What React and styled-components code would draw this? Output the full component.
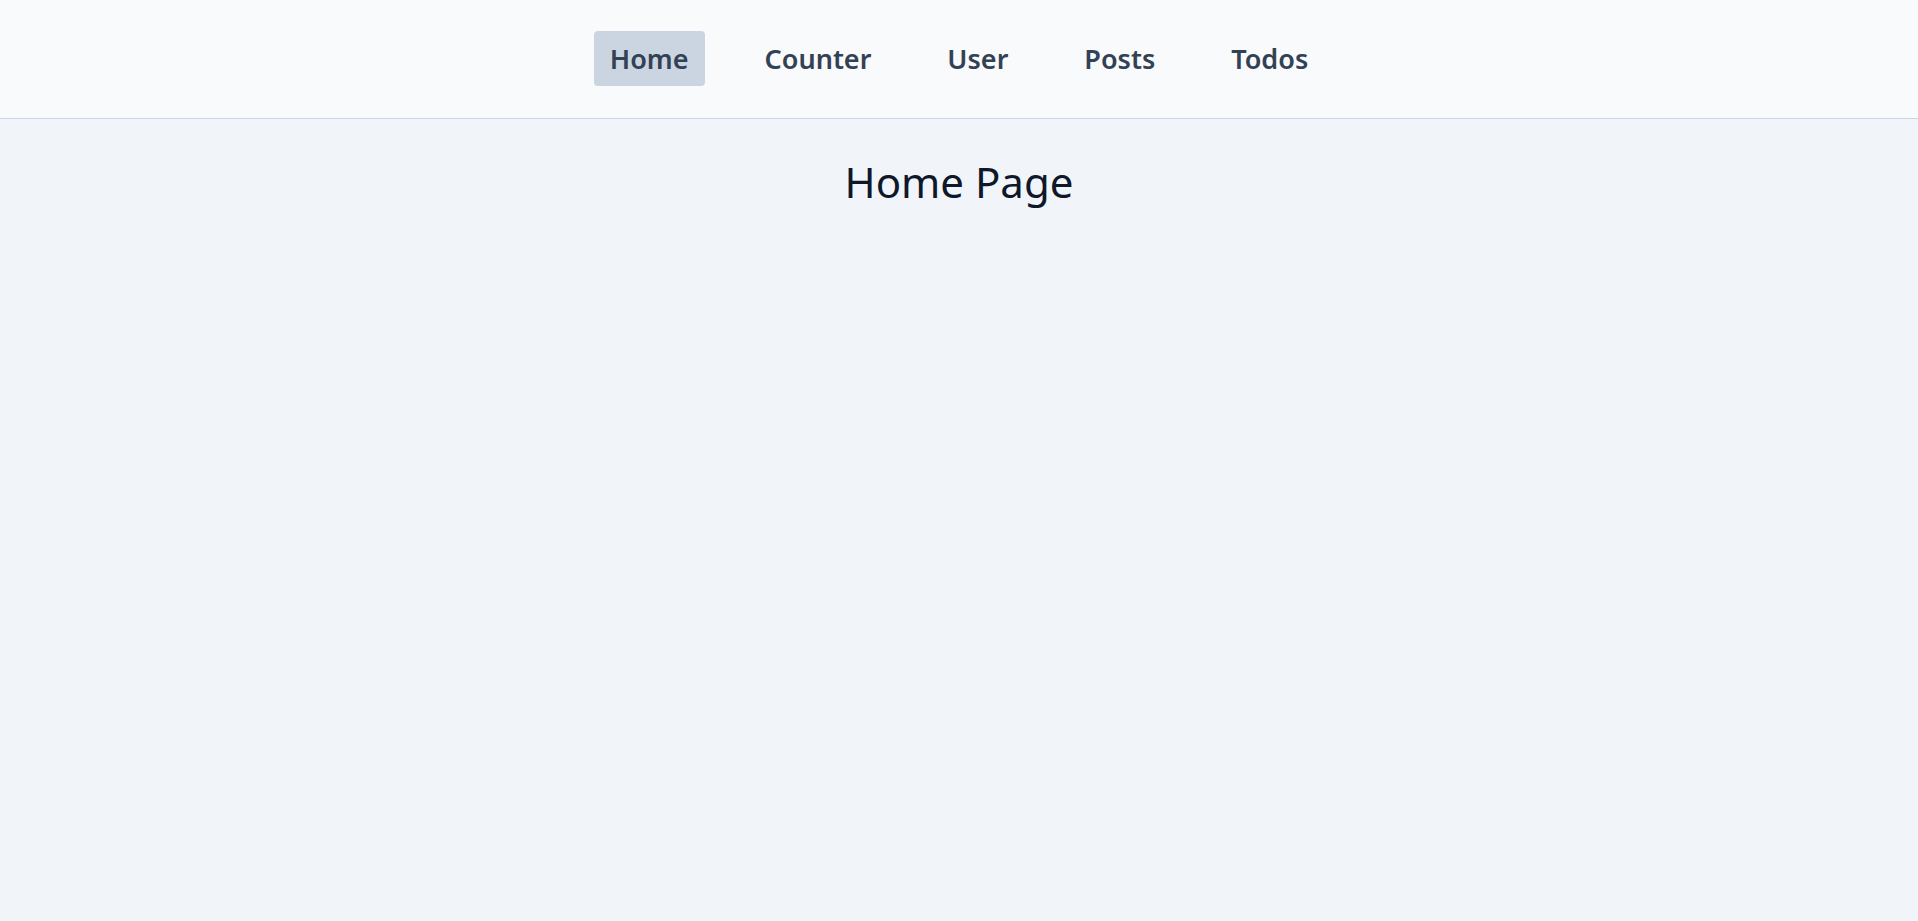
import React from "react";
import styled, { createGlobalStyle } from "styled-components";

const GlobalStyle = createGlobalStyle`
  html, body {
    margin: 0;
    padding: 0;
    background: #f1f5f9;
    font-family: "Noto Sans", "Open Sans", sans-serif;
  }
  #root {
    min-height: 100vh;
  }
`;

const Nav = styled.nav`
  display: flex;
  justify-content: center;
  gap: 44px;
  padding: 31px 0 32px;
  background: #f8fafc;
  border-bottom: 1px solid #cbd5e1;
`;

const NavLink = styled.a`
  display: flex;
  align-items: center;
  height: 55px;
  padding: 0 16px;
  border-radius: 4px;
  font-size: 27px;
  font-weight: 600;
  color: #334155;
  text-decoration: none;
  background: ${(p) => (p.$active ? "#cbd5e1" : "transparent")};
`;

const Main = styled.main`
  display: flex;
  justify-content: center;
  padding-top: 34px;
`;

const Title = styled.h1`
  margin: 0;
  font-size: 42px;
  font-weight: 400;
  color: #0f172a;
`;

const links = ["Home", "Counter", "User", "Posts", "Todos"];

export default function App() {
  return (
    <>
      <GlobalStyle />
      <Nav>
        {links.map((l) => (
          <NavLink key={l} href="#" $active={l === "Home"}>
            {l}
          </NavLink>
        ))}
      </Nav>
      <Main>
        <Title>Home Page</Title>
      </Main>
    </>
  );
}
